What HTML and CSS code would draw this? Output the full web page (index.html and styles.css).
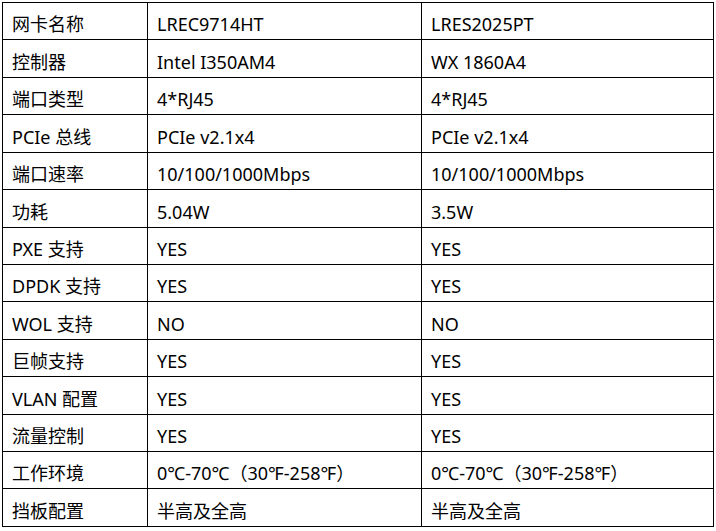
FILE: index.html
```html
<!DOCTYPE html>
<html lang="zh">
<head>
<meta charset="utf-8">
<link rel="stylesheet" href="styles.css">
</head>
<body>
<table class="spec">
  <colgroup><col class="c1"><col class="c2"><col class="c3"></colgroup>
  <tr><td>网卡名称</td><td>LREC9714HT</td><td>LRES2025PT</td></tr>
  <tr><td>控制器</td><td>Intel I350AM4</td><td>WX 1860A4</td></tr>
  <tr><td>端口类型</td><td>4*RJ45</td><td>4*RJ45</td></tr>
  <tr><td>PCIe 总线</td><td>PCIe v2.1x4</td><td>PCIe v2.1x4</td></tr>
  <tr><td>端口速率</td><td>10/100/1000Mbps</td><td>10/100/1000Mbps</td></tr>
  <tr><td>功耗</td><td>5.04W</td><td>3.5W</td></tr>
  <tr><td>PXE 支持</td><td>YES</td><td>YES</td></tr>
  <tr><td>DPDK 支持</td><td>YES</td><td>YES</td></tr>
  <tr><td>WOL 支持</td><td>NO</td><td>NO</td></tr>
  <tr><td>巨帧支持</td><td>YES</td><td>YES</td></tr>
  <tr><td>VLAN 配置</td><td>YES</td><td>YES</td></tr>
  <tr><td>流量控制</td><td>YES</td><td>YES</td></tr>
  <tr><td>工作环境</td><td>0℃-70℃（30℉-258℉）</td><td>0℃-70℃（30℉-258℉）</td></tr>
  <tr><td>挡板配置</td><td>半高及全高</td><td>半高及全高</td></tr>
</table>
</body>
</html>
```
FILE: styles.css
```css
html, body {
  margin: 0;
  padding: 0;
  background: #ffffff;
}
body {
  padding: 2px 0 0 2px;
}
.spec {
  border-collapse: collapse;
  table-layout: fixed;
  width: 712px;
  font-family: "Noto Sans", "Noto Sans CJK SC", sans-serif;
  font-size: 18px;
  color: #000;
}
.c1 { width: 145px; }
.c2 { width: 274px; }
.c3 { width: 292px; }
.spec td {
  border: 1px solid #000;
  height: 37.43px;
  padding: 0 10px 3px 9px;
  line-height: 24px;
  vertical-align: bottom;
  white-space: nowrap;
  box-sizing: border-box;
}
```
